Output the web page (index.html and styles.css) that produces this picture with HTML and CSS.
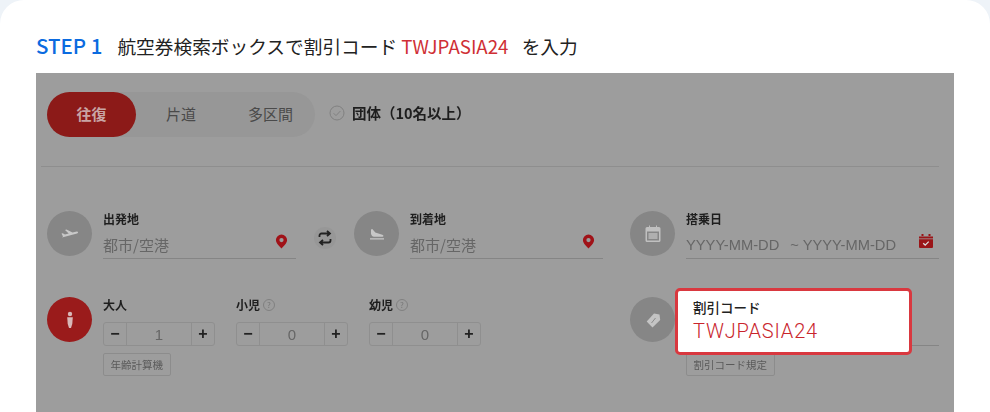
FILE: index.html
```html
<!DOCTYPE html>
<html lang="ja">
<head>
<meta charset="utf-8">
<title>STEP 1</title>
<link rel="stylesheet" href="styles.css">
</head>
<body>
<main class="card">
  <h2 class="heading"><span class="step">STEP 1</span><span class="desc">航空券検索ボックスで割引コード <em class="code">TWJPASIA24</em> を入力</span></h2>
  <section class="shot">
    <div class="top">
      <div class="tabs">
        <span class="tab active">往復</span>
        <span class="tab t2">片道</span>
        <span class="tab t3">多区間</span>
      </div>
      <svg class="check" viewBox="0 0 16 16"><circle cx="8" cy="8" r="7" fill="none" stroke="#808080" stroke-width="1"/><path d="M4.600 8.200l2.400 2.400 4.400-4.600" fill="none" stroke="#808080" stroke-width="1"/></svg>
      <span class="group">団体（10名以上）</span>
    </div>
    <div class="rule"></div>
    <div class="row r1">
      <div class="f f1">
        <span class="dot"><svg viewBox="0 0 24 24" class="ico"><path d="M4 15.500l15-4c1.500-.5 1.500-2-.2-2l-4.300 1-6-3-1.500.5 3.700 3.600-3.700 1-2.300-1.400-1.200.4 1.500 2.900z" fill="#c8c8c8"/></svg></span>
        <div class="field w193">
          <b class="lab">出発地</b>
          <div class="inp"><span>都市/空港</span>
            <svg class="pin" viewBox="0 0 14 16"><path d="M7 .5a6 6 0 0 1 6 6c0 3.500-3.500 6.500-6 9-2.500-2.500-6-5.500-6-9a6 6 0 0 1 6-6z" fill="#a01218"/><circle cx="7" cy="6.500" r="2.300" fill="#9c9c9c"/></svg>
          </div>
        </div>
      </div>
      <span class="swap"><svg viewBox="0 0 16 16"><path d="M2.500 7V5.500c0-1.200.9-2 2-2H12M10 .8l3 2.700-3 2.700M13.500 9v1.500c0 1.200-.9 2-2 2H4M6 9.800l-3 2.700 3 2.700" fill="none" stroke="#222" stroke-width="1.800"/></svg></span>
      <div class="f f2">
        <span class="dot"><svg viewBox="0 0 24 24" class="ico"><path d="M6 7.500l1.300-.5 3 3.400 7 2.400c1.500.5 1.500 2 0 2H9c-1.500 0-2.500-1-3-3zM5 16.300h14v1.200H5z" fill="#c8c8c8"/></svg></span>
        <div class="field w193">
          <b class="lab">到着地</b>
          <div class="inp"><span>都市/空港</span>
            <svg class="pin" viewBox="0 0 14 16"><path d="M7 .5a6 6 0 0 1 6 6c0 3.500-3.500 6.500-6 9-2.500-2.500-6-5.500-6-9a6 6 0 0 1 6-6z" fill="#a01218"/><circle cx="7" cy="6.500" r="2.300" fill="#9c9c9c"/></svg>
          </div>
        </div>
      </div>
      <div class="f f3">
        <span class="dot"><svg viewBox="0 0 24 24" class="ico"><path d="M6 5h2V3.500h1V5h6V3.500h1V5h2a1.500 1.500 0 0 1 1.500 1.500v12A1.500 1.500 0 0 1 18 20H6a1.500 1.500 0 0 1-1.500-1.500v-12A1.500 1.500 0 0 1 6 5zm0 4.500v9h12v-9z" fill="#c0c0c0"/><path d="M7.500 11h9v6h-9z" fill="#c0c0c0" opacity=".7"/></svg></span>
        <div class="field w253">
          <b class="lab">搭乗日</b>
          <div class="inp dates"><span>YYYY-MM-DD</span><span class="to">~ YYYY-MM-DD</span>
            <svg class="cal" viewBox="0 0 16 16"><path d="M1 3.500h14V14a1 1 0 0 1-1 1H2a1 1 0 0 1-1-1zM3.500 1h2v2h-2zM10.500 1h2v2h-2z" fill="#9a1518"/><path d="M1 5.800h14" stroke="#9c9c9c" stroke-width=".8"/><path d="M5.200 10.300l2 1.800 3.500-3.500" fill="none" stroke="#ddd" stroke-width="1.300"/></svg>
          </div>
        </div>
      </div>
    </div>
    <div class="row r2">
      <div class="f pax">
        <span class="dot red"><svg viewBox="0 0 24 24" class="ico"><circle cx="12" cy="6" r="2.200" fill="#d8b8b8"/><path d="M9.200 9.300h5.600l-.5 6.500-1.300 4.200h-2l-1.300-4.200z" fill="#d8b8b8"/></svg></span>
        <div class="paxcol">
          <div class="steppers">
            <div class="count">
              <b class="lab">大人</b>
              <div class="stepper"><i>−</i><span>1</span><i>+</i></div>
            </div>
            <div class="count">
              <b class="lab">小児<span class="q">?</span></b>
              <div class="stepper"><i>−</i><span>0</span><i>+</i></div>
            </div>
            <div class="count">
              <b class="lab">幼児<span class="q">?</span></b>
              <div class="stepper"><i>−</i><span>0</span><i>+</i></div>
            </div>
          </div>
          <span class="btn">年齢計算機</span>
        </div>
      </div>
      <div class="f f4">
        <span class="dot"><svg viewBox="0 0 24 24" class="ico"><path d="M13 5.500l5.500 1 .7 5.500-7.700 7.500-5.800-6z" fill="#c4c4c4"/><path d="M10.500 15l4-5" stroke="#8a8a8a" stroke-width="1"/></svg></span>
        <div class="paxcol">
          <div class="codeline"></div>
          <span class="btn">割引コード規定</span>
        </div>
      </div>
    </div>
    <div class="hl">
      <b class="hl-lab">割引コード</b>
      <span class="hl-val">TWJPASIA24</span>
    </div>
  </section>
</main>
</body>
</html>
```
FILE: styles.css
```css
* { box-sizing: border-box; }
html, body { margin: 0; height: 412px; overflow: hidden; background: #eef3f8; }
body { font-family: "Noto Sans CJK JP", "Noto Sans", sans-serif; }
.card { background: #fff; border-radius: 24px 24px 0 0; height: 412px; padding: 31px 36px 0; }
.heading { margin: 0 0 13px; height: 29px; display: flex; align-items: center; font-weight: 400; font-size: 18.700px; line-height: 29px; color: #222; }
.step { font-size: 20.500px; font-weight: 500; color: #0b6be0; margin-right: 15px; }
.code { font-style: normal; color: #cf2f35; margin-right: 9px; }
.shot { position: relative; width: 918px; height: 339px; background: #9d9d9d; padding: 19px 15px 0 11px; overflow: hidden; }
.top, .rule, .row { filter: blur(.7px); }
.top { display: flex; align-items: center; height: 45px; }
.tabs { display: flex; width: 268px; height: 45px; border-radius: 23px; background: #979797; font-size: 15px; color: #4a4a4a; }
.tab { display: flex; align-items: center; justify-content: center; padding-bottom: 2px; }
.active { width: 89px; height: 45px; border-radius: 23px; background: #8c1a18; color: #c9a5a5; font-weight: 700; }
.t2 { width: 90px; }
.t3 { width: 89px; }
.check { width: 16px; height: 16px; margin: 0 0 3px 14px; }
.group { margin: 0 0 5px 7px; font-size: 14.500px; font-weight: 700; color: #1e1e1e; }
.rule { height: 1px; background: #8e8e8e; margin: 29px 0 0 -6px; }
.row { display: flex; }
.r1 { margin-top: 44px; height: 48px; }
.r2 { margin-top: 38px; }
.f { display: flex; }
.dot { flex: none; width: 45px; height: 45px; border-radius: 50%; background: #868686; display: flex; align-items: center; justify-content: center; margin-right: 11px; }
.dot.red { background: #9a1b1b; }
.ico { width: 24px; height: 24px; }
.field { display: flex; flex-direction: column; }
.w193 { width: 193px; }
.w253 { width: 253px; }
.lab { display: flex; align-items: center; margin-top: -1px; font-size: 12px; line-height: 18px; height: 18px; color: #1e1e1e; font-weight: 700; }
.inp { position: relative; display: flex; align-items: center; height: 31px; padding-top: 3px; border-bottom: 1px solid #858585; font-size: 15px; color: #666; }
.pin { position: absolute; right: 8px; top: 6px; width: 13px; height: 15px; }
.cal { position: absolute; right: 5px; top: 5px; width: 16px; height: 16px; }
.dates { font-family: "Liberation Sans", sans-serif; font-size: 14.700px; }
.to { margin-left: 11px; }
.swap { flex: none; width: 22px; height: 22px; margin: 16px 18px 0; border-radius: 50%; background: #979797; display: flex; align-items: center; justify-content: center; }
.swap svg { width: 16px; height: 16px; }
.f2 { margin-right: 27px; }
.pax { width: 583px; }
.paxcol { display: flex; flex-direction: column; align-items: flex-start; }
.steppers { display: flex; gap: 21px; }
.count { width: 112px; }
.stepper { display: flex; height: 24px; margin-top: 8px; border: 1px solid #8f8f8f; border-radius: 3px; font-family: "Liberation Sans", sans-serif; font-size: 15px; color: #666; }
.stepper i { width: 22px; display: flex; align-items: center; justify-content: center; font-style: normal; font-weight: 700; font-size: 16px; color: #222; }
.stepper span { flex: 1; display: flex; align-items: center; justify-content: center; border-left: 1px solid #8f8f8f; border-right: 1px solid #8f8f8f; }
.q { display: inline-flex; align-items: center; justify-content: center; width: 12px; height: 12px; margin-left: 3px; border: 1px solid #808080; border-radius: 50%; font-size: 8px; font-weight: 400; color: #777; }
.btn { display: inline-flex; align-items: center; height: 23px; margin-top: 7px; padding: 0 6.500px; border: 1px solid #8c8c8c; border-radius: 2px; font-size: 10.500px; color: #5a5a5a; }
.codeline { width: 253px; height: 49px; border-bottom: 1px solid #858585; }
.hl { position: absolute; left: 639px; top: 215px; width: 237px; height: 67px; padding: 7px 15px 0; background: #fff; border: 3px solid #d9383f; border-radius: 5px; display: flex; flex-direction: column; }
.hl-lab { font-size: 13.500px; line-height: 19px; font-weight: 500; color: #222; }
.hl-val { font-size: 20px; line-height: 29px; letter-spacing: .85px; font-weight: 300; color: #c9252c; font-family: Roboto, "Noto Sans", sans-serif; }
```
